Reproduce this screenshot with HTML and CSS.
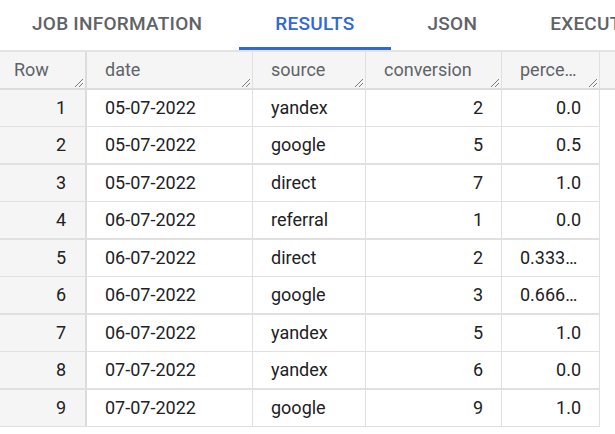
FILE: index.html
```html
<!DOCTYPE html>
<html>
<head>
<meta charset="utf-8">
<link rel="stylesheet" href="styles.css">
</head>
<body>
<div class="page">
  <div class="tabs">
    <div class="tab">Job information</div>
    <div class="tab active">Results</div>
    <div class="tab">JSON</div>
    <div class="tab">Execution details</div>
  </div>
  <div class="grid">
    <div class="row head">
      <div class="cell rn hcell">Row<svg class="grip" viewBox="0 0 8 8"><path d="M0 8L8 0M4 8L8 4"/></svg></div>
      <div class="cell hcell">date<svg class="grip" viewBox="0 0 8 8"><path d="M0 8L8 0M4 8L8 4"/></svg></div>
      <div class="cell hcell">source<svg class="grip" viewBox="0 0 8 8"><path d="M0 8L8 0M4 8L8 4"/></svg></div>
      <div class="cell hcell">conversion<svg class="grip" viewBox="0 0 8 8"><path d="M0 8L8 0M4 8L8 4"/></svg></div>
      <div class="cell hcell">percentage<svg class="grip" viewBox="0 0 8 8"><path d="M0 8L8 0M4 8L8 4"/></svg></div>
      <div class="cell filler"></div>
    </div>
    <div class="row"><div class="cell rn">1</div><div class="cell">05-07-2022</div><div class="cell">yandex</div><div class="cell num">2</div><div class="cell num">0.0</div><div class="cell filler"></div></div>
    <div class="row"><div class="cell rn">2</div><div class="cell">05-07-2022</div><div class="cell">google</div><div class="cell num">5</div><div class="cell num">0.5</div><div class="cell filler"></div></div>
    <div class="row"><div class="cell rn">3</div><div class="cell">05-07-2022</div><div class="cell">direct</div><div class="cell num">7</div><div class="cell num">1.0</div><div class="cell filler"></div></div>
    <div class="row"><div class="cell rn">4</div><div class="cell">06-07-2022</div><div class="cell">referral</div><div class="cell num">1</div><div class="cell num">0.0</div><div class="cell filler"></div></div>
    <div class="row"><div class="cell rn">5</div><div class="cell">06-07-2022</div><div class="cell">direct</div><div class="cell num">2</div><div class="cell num">0.3333333333333333</div><div class="cell filler"></div></div>
    <div class="row"><div class="cell rn">6</div><div class="cell">06-07-2022</div><div class="cell">google</div><div class="cell num">3</div><div class="cell num">0.6666666666666666</div><div class="cell filler"></div></div>
    <div class="row"><div class="cell rn">7</div><div class="cell">06-07-2022</div><div class="cell">yandex</div><div class="cell num">5</div><div class="cell num">1.0</div><div class="cell filler"></div></div>
    <div class="row"><div class="cell rn">8</div><div class="cell">07-07-2022</div><div class="cell">yandex</div><div class="cell num">6</div><div class="cell num">0.0</div><div class="cell filler"></div></div>
    <div class="row"><div class="cell rn">9</div><div class="cell">07-07-2022</div><div class="cell">google</div><div class="cell num">9</div><div class="cell num">1.0</div><div class="cell filler"></div></div>
  </div>
</div>
</body>
</html>
```

FILE: styles.css
```css
html, body {
  margin: 0;
  padding: 0;
  background: #ffffff;
}
.page {
  width: 615px;
  height: 434px;
  overflow: hidden;
  font-family: Roboto, "Liberation Sans", sans-serif;
}
.tabs {
  display: flex;
  height: 50px;
  margin-left: -4.5px;
  white-space: nowrap;
}
.tab {
  box-sizing: border-box;
  height: 50px;
  padding: 0 36.5px;
  line-height: 46px;
  font-size: 19px;
  font-weight: 500;
  letter-spacing: 0.25px;
  text-transform: uppercase;
  color: #5f6368;
  flex: none;
  border-bottom: 3px solid transparent;
  padding-top: 1px;
}
.tab.active {
  color: #3367d6;
  border-bottom-color: #3367d6;
}
.grid {
  border-top: 2px solid #e3e3e3;
}
.row {
  display: grid;
  grid-template-columns: 87px 166px 113px 136px 98px 1fr;
}
.cell {
  box-sizing: border-box;
  height: 37px;
  line-height: 36px;
  padding: 0 18px;
  font-size: 18px;
  color: #202124;
  white-space: nowrap;
  overflow: hidden;
  text-overflow: ellipsis;
  border-right: 1px solid #e0e0e0;
  border-bottom: 1px solid #e0e0e0;
}
.row:nth-child(odd) .cell {
  height: 38px;
  border-bottom-width: 2px;
}
.cell.rn {
  background: #f5f5f5;
  text-align: right;
  padding: 0 19px 0 14px;
  border-right: 2px solid #dcdcdc;
}
.cell.num {
  text-align: right;
}
.cell.filler {
  border: none;
}
.head .cell {
  height: 38px;
  background: #f5f5f5;
  color: #5f6368;
  border-bottom: 2px solid #dcdcdc;
  position: relative;
}
.head .hcell.rn {
  text-align: left;
}
.head .cell.filler {
  border-bottom: 2px solid #dcdcdc;
}
.grip {
  position: absolute;
  right: 2px;
  bottom: 1px;
  width: 8px;
  height: 8px;
  stroke: #7a7f85;
  stroke-width: 1;
  fill: none;
}
```
